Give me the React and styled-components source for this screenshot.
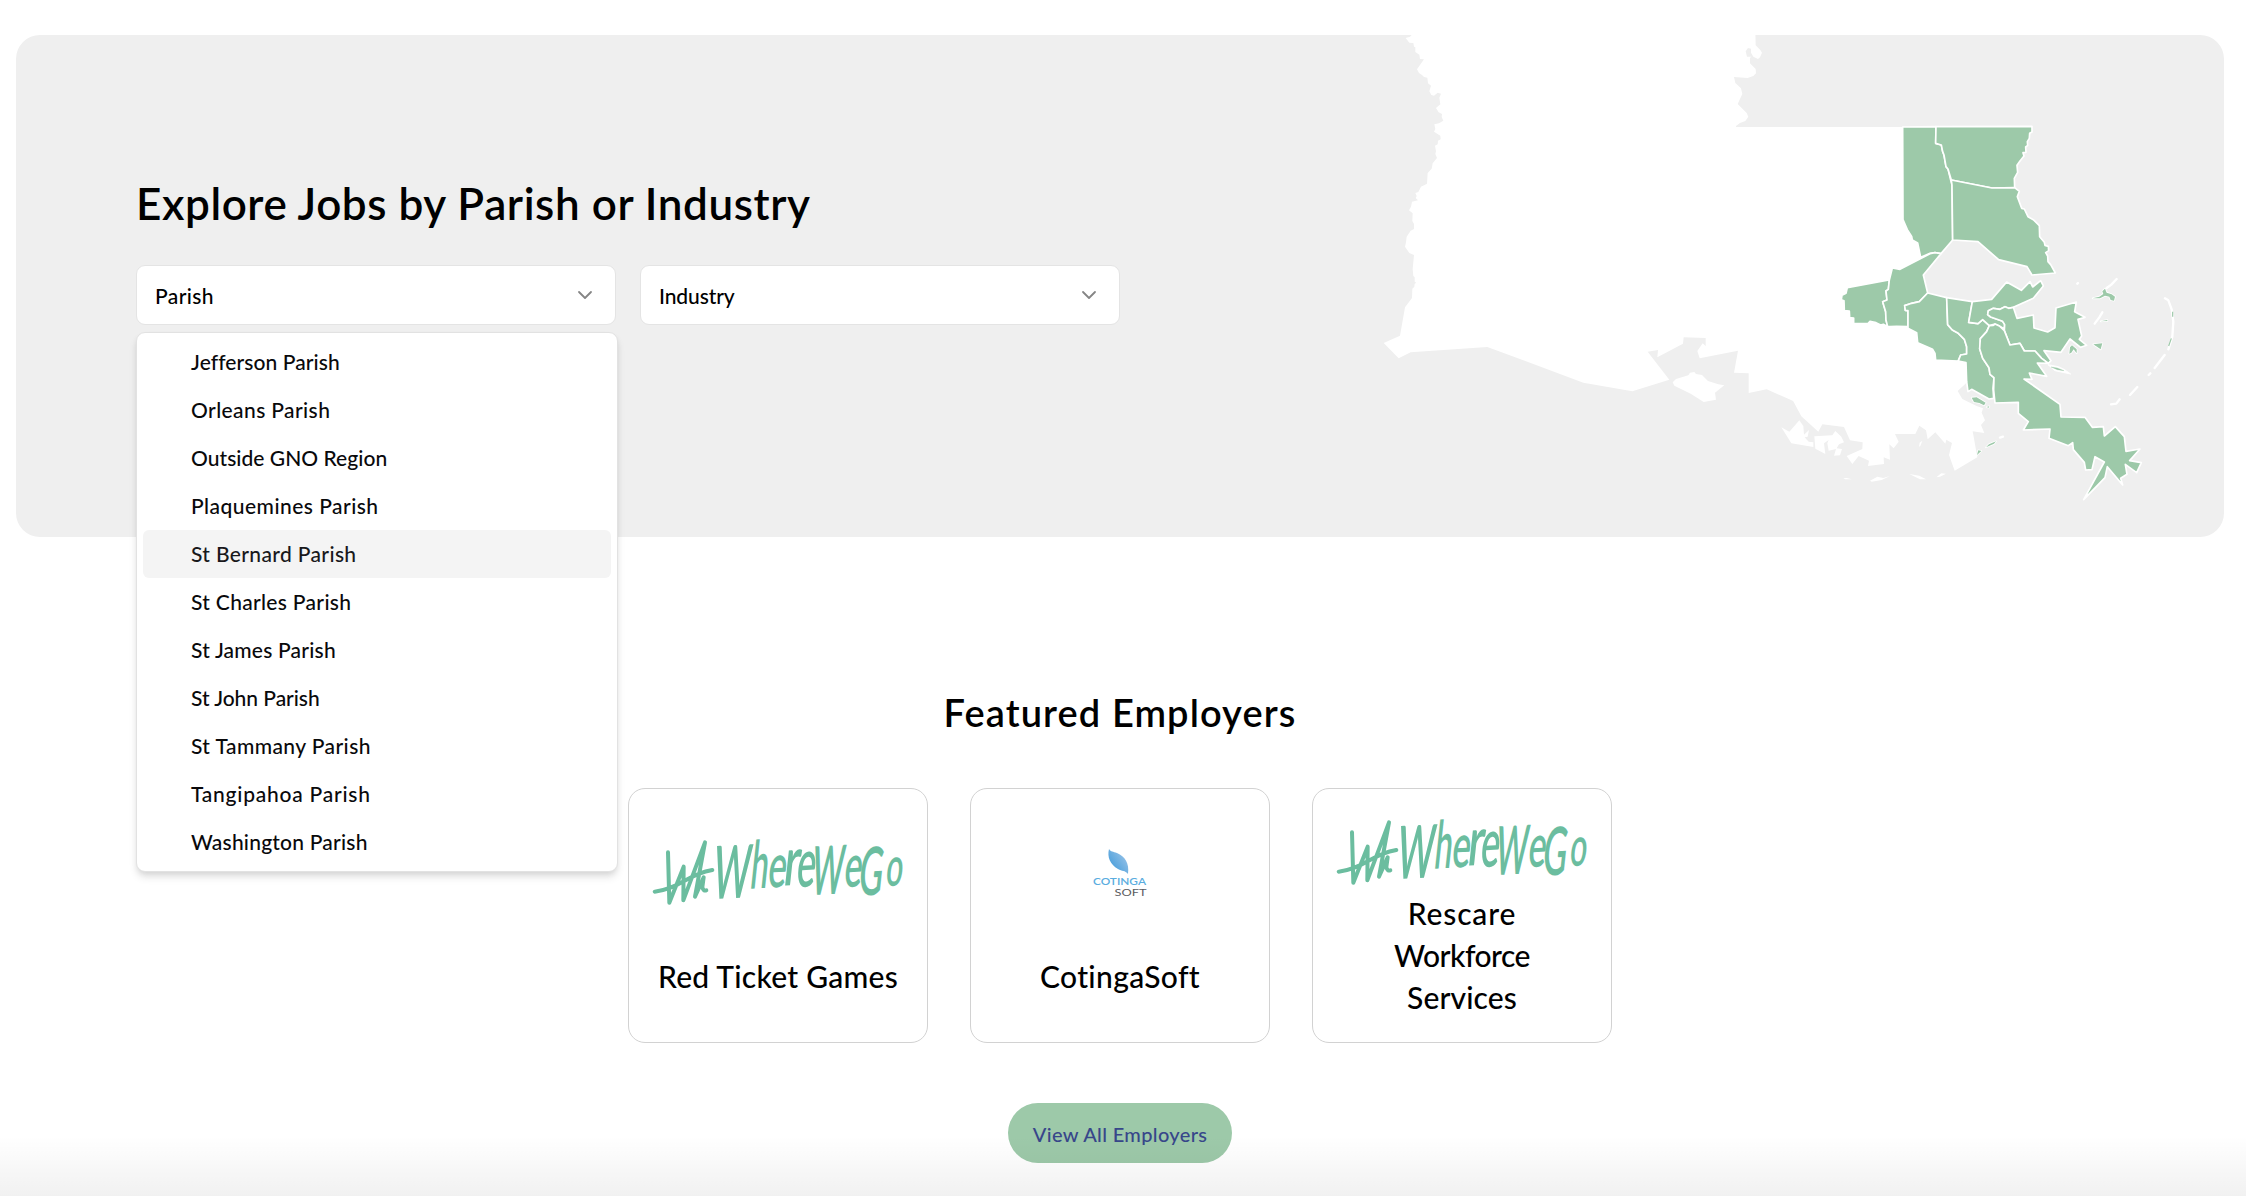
import React from 'react';
import styled, { createGlobalStyle } from 'styled-components';

const Global = createGlobalStyle`
  *, *::before, *::after { box-sizing: border-box; }
  body { margin: 0; background: #fff; color: #000; font-family: Lato, "Open Sans", sans-serif; font-weight: 500; }
  h1, h2, ul { margin: 0; padding: 0; }
  button { font: inherit; color: inherit; }
`;

const Page = styled.div`
  position: relative;
  height: 1196px;
  padding: 35px 22px 0 16px;
  overflow: hidden;
`;

const Hero = styled.section`
  display: flex;
  justify-content: space-between;
  height: 502px;
  padding-left: 120px;
  border-radius: 24px;
  background: #efefef;
`;

const HeroContent = styled.div`
  display: flex;
  flex-direction: column;
  gap: 37px;
  padding-top: 143px;
`;

const HeroTitle = styled.h1`
  font-size: 44px;
  line-height: 50px;
  font-weight: 600;
  letter-spacing: 0.58px;
`;

const Filters = styled.div`
  display: flex;
  gap: 24px;
`;

const Select = styled.div`
  position: relative;
  width: 480px;
`;

const Trigger = styled.button`
  display: flex;
  align-items: center;
  justify-content: space-between;
  width: 100%;
  height: 60px;
  padding: 0 18px;
  border: 1px solid #e4e4e4;
  border-radius: 9px;
  background: #fff;
  font-size: 21px;
  letter-spacing: ${(p) => p.$tracking}px;

  svg { display: block; }
`;

const Menu = styled.ul`
  position: absolute;
  z-index: 2;
  top: 67px;
  left: 0;
  width: 482px;
  padding: 5px 6px;
  border: 1px solid #e2e2e2;
  border-radius: 9px;
  background: #fff;
  box-shadow: 0 6px 9px -1px rgba(0, 0, 0, 0.11), 0 3px 6px -2px rgba(0, 0, 0, 0.1);
  list-style: none;
`;

const Option = styled.li`
  height: 48px;
  padding-left: 48px;
  border-radius: 6px;
  background: ${(p) => (p.$active ? '#f4f4f4' : 'transparent')};
  color: ${(p) => (p.$active ? '#18181b' : '#09090b')};
  font-size: 21px;
  line-height: 48px;
  letter-spacing: ${(p) => p.$tracking}px;
`;

const MapArt = styled.svg`
  display: block;
  width: 841px;
  height: 502px;
`;

const Featured = styled.section`
  display: flex;
  flex-direction: column;
  align-items: center;
  padding-top: 153px;
`;

const SectionTitle = styled.h2`
  font-size: 38px;
  line-height: 44px;
  font-weight: 600;
  letter-spacing: 1.1px;
`;

const Cards = styled.div`
  display: flex;
  gap: 42px;
  margin: 54px 0 60px;
`;

const Card = styled.article`
  display: flex;
  flex-direction: column;
  align-items: center;
  justify-content: center;
  gap: ${(p) => p.$gap}px;
  width: 300px;
  height: 255px;
  border: 1px solid #d2d2d2;
  border-radius: 17px;
`;

const LogoBox = styled.div`
  display: flex;
  align-items: center;
  justify-content: center;
  height: 77px;

  svg { display: block; overflow: visible; }
`;

const Name = styled.div`
  display: flex;
  flex-direction: column;
  align-items: center;
  font-size: 30px;
  line-height: 42px;
`;

const NameLine = styled.span`
  letter-spacing: ${(p) => p.$tracking}px;
`;

const PillButton = styled.button`
  width: 224px;
  height: 60px;
  padding: 1px 0 0;
  border: 0;
  border-radius: 30px;
  background: #9dc9a9;
  color: #37468a;
  font-size: 20px;
  letter-spacing: 0.34px;
`;

const BottomFade = styled.div`
  position: absolute;
  left: 0;
  right: 0;
  bottom: 0;
  height: 60px;
  background: linear-gradient(rgba(0, 0, 0, 0), rgba(0, 0, 0, 0.055));
  pointer-events: none;
`;

const parishes = [
  ['Jefferson Parish', 0.08],
  ['Orleans Parish', 0.4],
  ['Outside GNO Region', 0.04],
  ['Plaquemines Parish', 0.47],
  ['St Bernard Parish', 0.36],
  ['St Charles Parish', 0.32],
  ['St James Parish', 0.21],
  ['St John Parish', -0.03],
  ['St Tammany Parish', 0.42],
  ['Tangipahoa Parish', 0.76],
  ['Washington Parish', 0.22],
];

const stateBody =
  '155,30 155,45 150,50 137,54 148,68 160,69 162,80 166,82 166,96 178,104 180,117 192,118 171,148 177,159 186,165 192,171 202,173 204,190 213,197 208,214 214,225 222,227 233,218 243,221 238,233 241,253 228,264 236,277 246,282 245,291 250,302 237,310 223,313 226,327 222,335 241,347 242,358 234,362 233,373 225,377 228,394 226,402 231,414 218,430 215,446 203,459 201,491 183,500 175,516 166,519 170,528 167,534 174,541 156,545 153,560 147,571 158,580 157,603 162,612 162,627 152,632 140,650 138,667 135,680 148,699 162,705 158,748 160,768 164,772 164,785 169,788 164,791 163,800 157,806 156,834 135,862 120,947 71,969 116,1015 152,997 382,981 670,1088 817,1114 928,1079 863,995 894,990 892,1012 969,971 971,952 1037,954 1037,978 1028,970 1012,993 1019,1015 1134,992 1122,1058 1166,1060 1166,1119 1220,1108 1298,1142 1700,1142 1780,1000 1680,840 1680,321 1128,321 1128,318 1140,309 1156,303 1165,290 1160,279 1133,252 1147,222 1143,205 1126,189 1122,171 1163,174 1180,168 1188,160 1187,147 1170,130 1170,113 1175,110 1161,110 1157,94 1164,84 1173,86 1173,98 1180,110 1194,117 1200,112 1206,98 1201,90 1187,76 1186,30';

const coast = [
  '400,200 459,302 484,349 535,395 547,373 612,381 630,421 668,427 667,447 620,468 637,492 656,468 687,482 684,498 732,492 731,472 750,479 748,433 761,445 776,425 765,402 826,402 838,377 858,391 863,418 886,397 916,431 919,419 936,429 927,465 944,512 1012,472 998,394 1033,399 1023,375 1035,361 1025,338 1029,325 1010,318 967,297 953,273 978,250 1000,180 780,60 600,0',
  '98,247 108,237 145,226 150,218 163,216 168,222 186,225 204,243 235,253 253,256 225,278 228,299 191,306 152,281 103,257',
  '424,382 448,395 478,361 490,378 492,404 507,390 503,410 494,412 506,425 520,427 520,441 454,430',
  '523,409 577,406 586,393 604,410 612,427 597,433 590,445 606,447 600,466 582,467 588,447 566,452 562,430 566,420 552,430 556,462 526,446',
  '610,535 620,534 636,538 615,538',
  '690,542 712,530 730,534 750,528 725,540 695,545',
  '808,522 838,527 858,538 840,538',
  '889,532 904,520 918,521 900,530',
  '837,440 839,428 847,422 841,438',
];

const northParishes = [
  '248,81 348,80 347,130 364,135 368,155 372,165 378,200 384,207 392,240 396,255 398,420 363,461 345,458 330,460 302,472 293,429 277,420 275,409 262,389 249,359',
  '348,80 636,79 636,96 629,100 628,115 622,125 623,136 617,141 618,157 609,158 612,168 600,183 591,196 593,217 583,235 584,263 516,264 394,240 384,207 378,200 372,165 368,155 364,135 347,130',
  '394,240 516,264 584,263 598,274 592,290 605,325 613,327 624,350 640,359 658,377 659,410 673,427 675,436 685,439 686,452 677,458 683,468 684,485 692,494 706,519 636,525 621,500 536,479 474,425 398,420 396,255',
];

const southParishes = [
  '82,23 207,0 208,2 205,28 198,33 201,60 188,65 197,95 198,120 203,140 190,133 182,135 168,128 150,124 144,131 101,131 101,114 89,113 88,93 73,92 72,62 64,59 66,46 78,40',
  '217,-36 240,-32 330,-79 345,-82 363,-79 310,-15 323,39 298,65 275,70 254,77 256,91 264,92 264,140 230,139 210,140 203,140 198,120 197,95 188,65 201,60 198,33 205,28 208,0',
  '323,39 380,53 383,134 397,150 415,160 433,178 440,200 440,222 422,225 414,243 347,240 345,220 338,208 293,188 290,158 264,145 264,92 256,91 254,77 275,70 298,65',
  '380,53 457,65 446,127 474,131 488,119 508,137 500,155 481,176 481,200 479,206 488,235 507,263 510,283 522,293 519,325 521,355 507,357 455,328 444,335 440,305 438,248 415,243 422,225 440,222 440,200 433,178 415,160 397,150 383,134',
  '457,65 515,58 560,6 604,31 630,5 638,21 662,2 670,18 640,55 580,82 566,85 555,80 540,88 520,85 505,92 503,104 512,111 548,124 554,134 553,147 538,138 525,132 508,137 488,119 474,131 446,127',
  '580,82 591,115 640,105 642,144 683,156 705,143 708,84 769,66 764,95 795,112 774,118 785,168 778,178 800,196 782,202 750,177 723,217 672,212 693,242 685,250 665,235 645,213 613,213 600,190 570,195 553,152 554,134 548,124 512,111 503,104 505,92 520,85 540,88 555,80 566,85',
  '508,137 520,136 525,132 538,138 553,152 570,195 600,190 613,213 645,213 665,235 685,250 652,249 680,289 628,279 636,298 612,297 720,373 723,411 795,412 817,442 850,440 853,468 886,440 913,470 918,514 960,507 929,542 964,548 950,578 916,553 921,583 902,595 908,615 862,560 855,593 791,659 853,546 825,530 816,569 797,570 793,547 760,509 758,488 745,497 687,475 690,447 610,450 625,425 595,400 595,367 525,369 521,330 522,293 510,283 507,263 488,235 479,206 481,176 500,155',
];

const islets = [
  '455,353 470,352 497,368 492,376 478,369 462,366',
  '500,381 508,379 506,383',
  '471,525 475,511 484,513',
  '498,502 507,493 528,484 522,491',
  '748,221 750,202 756,196 770,208 770,220 761,208 754,218',
  '820,193 847,190 842,208',
  '818,55 838,50 850,42 847,34 855,26 860,38 875,43 885,50 882,62 872,60 868,50 855,47 840,55',
  '842,124 862,120 862,123',
];

const Islets = () => (
  <>
    <g fill="none" stroke="#fff" strokeWidth="7" strokeLinecap="round" strokeLinejoin="round">
      <path d="M860,24 L874,14 L890,-3 M824,131 L838,112 L847,97 M1035,55 L1045,61 L1055,88 L1060,125 L1057,170 L1045,208 M1034,225 L1004,264 M986,285 L991,280 M930,345 L952,321 M873,373 L889,371 L899,358 M540,473 L549,470 M772,11 L774,9" />
    </g>
    <polygon points="684,254 715,260 732,268 752,282 705,272" fill="#fff" stroke="#fff" strokeWidth="3" strokeLinejoin="round" />
    <path d="M693,261 L712,264 L732,272 L712,269 Z" fill="#9dc9a9" stroke="#9dc9a9" strokeWidth="1" />
    <g fill="#9dc9a9" stroke="#fff" strokeWidth="5" strokeLinejoin="round">
      {islets.map((p) => <polygon key={p} points={p} />)}
    </g>
    <g fill="#9dc9a9">
      {islets.map((p) => <polygon key={p} points={p} />)}
    </g>
    <path d="M1058,95 V110 M1054,175 L1046,198" stroke="#9dc9a9" strokeWidth="3.5" fill="none" />
  </>
);

const LouisianaMap = () => (
  <MapArt viewBox="1383 35 841 502" aria-label="Louisiana parishes">
    <g transform="translate(1360 20) scale(0.33333)">
      <polygon points={stateBody} fill="#fff" />
      <g transform="translate(840 840)" fill="#fff">
        {coast.map((p) => <polygon key={p} points={p} />)}
      </g>
      <g fill="#9dc9a9" stroke="#fff" strokeWidth="5" strokeLinejoin="round">
        <g transform="translate(1380 240)">
          {northParishes.map((p) => <polygon key={p} points={p} />)}
        </g>
        <g transform="translate(1380 780)">
          {southParishes.map((p) => <polygon key={p} points={p} />)}
        </g>
      </g>
      <g transform="translate(1380 780)"><Islets /></g>
    </g>
  </MapArt>
);

const Chevron = () => (
  <svg width="24" height="24" viewBox="0 0 24 24" fill="none" stroke="#858585" strokeWidth="1.8" strokeLinecap="round" strokeLinejoin="round">
    <path d="M6 9l6 6 6-6" />
  </svg>
);

/* [letter, x, baseline y, vertical scale, horizontal scale] */
const letters = [
  ['W', 174, 178, 1.5, 0.72],
  ['h', 288, 146, 1.35, 0.64],
  ['e', 341, 143, 1.25, 0.7],
  ['r', 388, 137, 1.4, 0.9],
  ['e', 427, 142, 1.38, 0.72],
  ['W', 470, 166, 1.38, 0.62],
  ['e', 570, 142, 1.22, 0.68],
  ['G', 613, 167, 1.36, 0.66],
  ['o', 695, 139, 1.12, 0.6],
];

const WhereWeGoLogo = () => (
  <svg width="250" height="65" viewBox="0 0 750 195" aria-label="WhereWeGo">
    <path
      d="M5,155 Q46,151 92,124 T178,90 M45,37 L49,188 L92,80 L91,181 L156,7 L126,170 L152,112 L148,142 Q151,154 160,151"
      fill="none"
      stroke="#6bbd9f"
      strokeWidth="12"
      strokeLinecap="round"
      strokeLinejoin="round"
    />
    <g fill="#6bbd9f" fontFamily="Lato, sans-serif" fontWeight="600" fontSize="148">
      {letters.map(([ch, x, y, sy, sx]) => (
        <text key={x} transform={`translate(${x} ${y}) skewX(-9) rotate(-3) scale(${sx} ${sy})`}>{ch}</text>
      ))}
    </g>
  </svg>
);

const CotingaLogo = () => (
  <svg width="54" height="48" viewBox="0 0 54 48" aria-label="Cotinga Soft">
    <defs>
      <linearGradient id="leaf" x1="1" y1="0.1" x2="0.2" y2="0.8">
        <stop offset="0" stopColor="#a3c8ea" />
        <stop offset="1" stopColor="#4b9fdb" />
      </linearGradient>
    </defs>
    <path d="M16,0 C18,3 20,2.500 24,4 C32,7.500 36.500,14 35,25 C32,21 29,22.500 25,20 C17,15.500 14,8 16,0 Z" fill="url(#leaf)" />
    <text x="0" y="36" fill="#5aade0" fontFamily="Lato, sans-serif" fontWeight="600" fontSize="10.200" textLength="53" lengthAdjust="spacingAndGlyphs">COTINGA</text>
    <text x="21.500" y="46.500" fill="#5c5c5f" fontFamily="Lato, sans-serif" fontWeight="400" fontSize="10.200" textLength="32" lengthAdjust="spacingAndGlyphs">SOFT</text>
  </svg>
);

const employers = [
  { logo: WhereWeGoLogo, gap: 44, lines: [['Red Ticket Games', 0.25]] },
  { logo: CotingaLogo, gap: 44, lines: [['CotingaSoft', 0.35]] },
  { logo: WhereWeGoLogo, gap: 1, lines: [['Rescare', 0.85], ['Workforce', -0.5], ['Services', 0.1]] },
];

export default function App() {
  return (
    <Page>
      <Global />
      <Hero>
        <HeroContent>
          <HeroTitle>Explore Jobs by Parish or Industry</HeroTitle>
          <Filters>
            <Select>
              <Trigger $tracking={0.41}>Parish<Chevron /></Trigger>
              <Menu>
                {parishes.map(([name, tracking]) => (
                  <Option key={name} $tracking={tracking} $active={name === 'St Bernard Parish'}>{name}</Option>
                ))}
              </Menu>
            </Select>
            <Select>
              <Trigger $tracking={-0.1}>Industry<Chevron /></Trigger>
            </Select>
          </Filters>
        </HeroContent>
        <LouisianaMap />
      </Hero>
      <Featured>
        <SectionTitle>Featured Employers</SectionTitle>
        <Cards>
          {employers.map(({ logo: Logo, gap, lines }) => (
            <Card key={lines[0][0]} $gap={gap}>
              <LogoBox><Logo /></LogoBox>
              <Name>
                {lines.map(([text, tracking]) => (
                  <NameLine key={text} $tracking={tracking}>{text}</NameLine>
                ))}
              </Name>
            </Card>
          ))}
        </Cards>
        <PillButton>View All Employers</PillButton>
      </Featured>
      <BottomFade />
    </Page>
  );
}
